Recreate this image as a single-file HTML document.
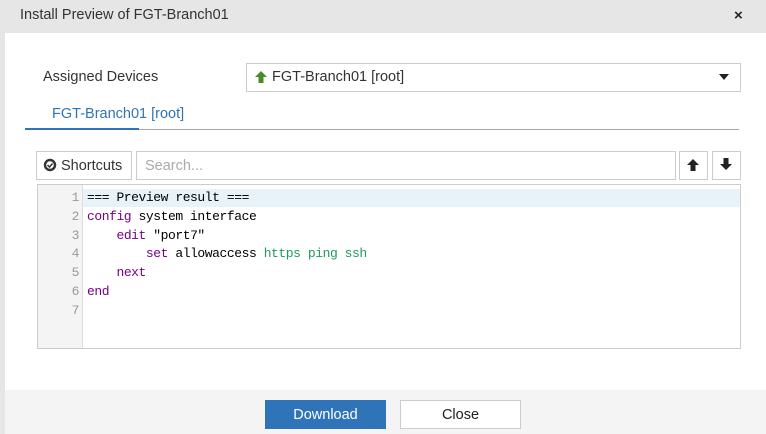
<!DOCTYPE html>
<html><head><style>
*{box-sizing:border-box;margin:0;padding:0}
body{width:766px;height:434px;overflow:hidden;background:#e6e6e6;font-family:"Liberation Sans",sans-serif;position:relative;color:#333}
.a{position:absolute}
.code{font-family:"Liberation Mono",monospace;font-size:13px;letter-spacing:-0.44px;line-height:18.8px;white-space:pre}
.k{color:#770088}.g{color:#219a5e}
</style></head><body>
<div class="a" style="left:20px;top:7px;font-size:14.5px;color:#333">Install Preview of FGT-Branch01</div>
<div class="a" style="left:734px;top:7px;font-size:15px;font-weight:bold;color:#222">×</div>
<div class="a" style="left:5px;top:33px;width:761px;height:357px;background:#fff"></div>
<div class="a" style="left:5px;top:390px;width:761px;height:44px;background:#f4f4f4"></div>
<div class="a" style="left:43px;top:69px;font-size:14.5px;color:#333">Assigned Devices</div>
<div class="a" style="left:246px;top:63px;width:495px;height:29px;border:1px solid #ccc;background:#fff"></div>
<svg class="a" style="left:254px;top:70px" width="14" height="14" viewBox="0 0 14 14"><path d="M7 1L13 7H9.5V13H4.5V7H1Z" fill="#4a8a2a"/></svg>
<div class="a" style="left:272px;top:69px;font-size:14.5px;color:#333">FGT-Branch01 [root]</div>
<svg class="a" style="left:719px;top:74px" width="10" height="6"><path d="M0 0H10L5 6Z" fill="#222"/></svg>
<div class="a" style="left:52px;top:106px;font-size:14.5px;color:#2f73b8">FGT-Branch01 [root]</div>
<div class="a" style="left:37px;top:129px;width:702px;height:1px;background:#aaa"></div>
<div class="a" style="left:25px;top:128px;width:114px;height:2px;background:#2f73b8"></div>
<div class="a" style="left:36px;top:151px;width:96px;height:29px;border:1px solid #ccc;background:#fff"></div>
<svg class="a" style="left:43px;top:158px" width="14" height="14" viewBox="0 0 14 14"><circle cx="7" cy="7" r="5" fill="none" stroke="#333" stroke-width="2.4"/><path d="M4.5 7l2 2 3-3.5" fill="none" stroke="#333" stroke-width="1.5"/></svg>
<div class="a" style="left:61px;top:158px;font-size:14.5px;color:#333">Shortcuts</div>
<div class="a" style="left:136px;top:151px;width:540px;height:29px;border:1px solid #ccc;background:#fff"></div>
<div class="a" style="left:145px;top:158px;font-size:14.5px;color:#aaa">Search...</div>
<div class="a" style="left:679px;top:151px;width:29px;height:29px;border:1px solid #ccc"></div>
<svg class="a" style="left:686px;top:158px" width="14" height="14" viewBox="0 0 14 14"><path d="M7 1L13 7H9.5V13H4.5V7H1Z" fill="#222"/></svg>
<div class="a" style="left:712px;top:151px;width:29px;height:29px;border:1px solid #ccc"></div>
<svg class="a" style="left:719px;top:157px" width="14" height="14" viewBox="0 0 14 14"><path d="M7 13L13 7H9.5V1H4.5V7H1Z" fill="#222"/></svg>
<div class="a" style="left:37px;top:184px;width:704px;height:165px;border:1px solid #ccc;background:#fff"></div>
<div class="a" style="left:38px;top:185px;width:45px;height:163px;background:#f4f4f4;border-right:1px solid #ddd"></div>
<div class="a" style="left:83px;top:189px;width:657px;height:18px;background:#e8f2f9"></div>
<div class="a code" style="left:38px;top:189px;width:41px;text-align:right;color:#999">1
2
3
4
5
6
7</div>
<div class="a code" style="left:87px;top:189px;color:#000">=== Preview result ===
<span class="k">config</span> system interface
    <span class="k">edit</span> "port7"
        <span class="k">set</span> allowaccess <span class="g">https ping ssh</span>
    <span class="k">next</span>
<span class="k">end</span></div>
<div class="a" style="left:265px;top:400px;width:121px;height:29px;background:#2f73b8;color:#fff;font-size:14.5px;text-align:center;line-height:30px">Download</div>
<div class="a" style="left:400px;top:400px;width:121px;height:29px;background:#fff;border:1px solid #ccc;color:#222;font-size:14.5px;text-align:center;line-height:28px">Close</div>
</body></html>
